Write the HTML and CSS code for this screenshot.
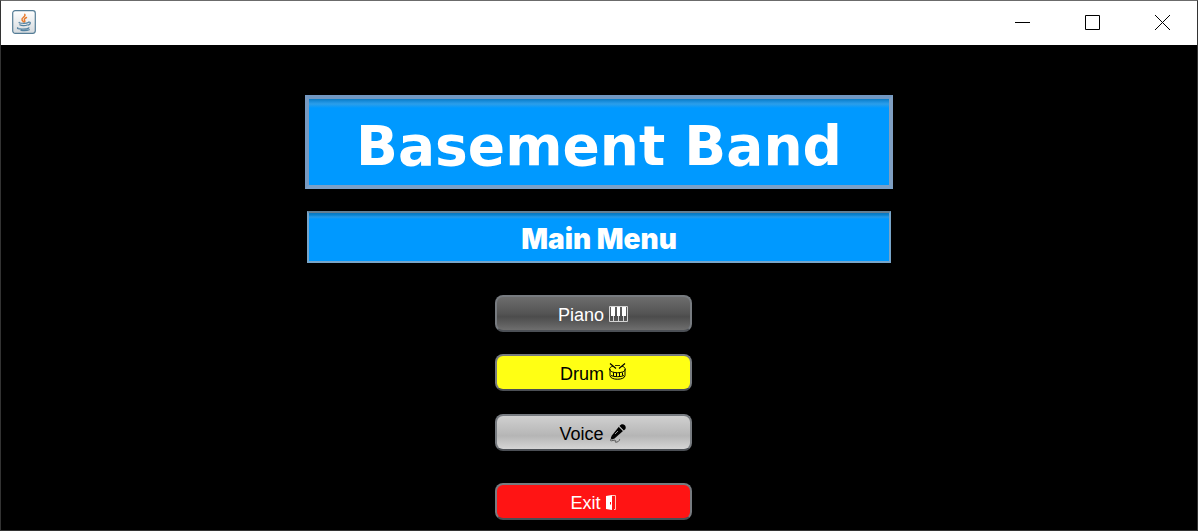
FILE: index.html
```html
<!DOCTYPE html>
<html lang="en">
<head>
<meta charset="utf-8">
<title>Basement Band</title>
<link rel="stylesheet" href="styles.css">
</head>
<body>
<div class="window">
  <header class="titlebar">
    <svg class="app-icon" width="24" height="24" viewBox="0 0 24 24" aria-hidden="true">
      <defs><linearGradient id="tile" x1="0" y1="0" x2="0" y2="1"><stop offset="0" stop-color="#fff"/><stop offset="1" stop-color="#d5dade"/></linearGradient></defs>
      <rect x=".7" y=".7" width="22.6" height="22.6" rx="2.5" fill="url(#tile)" stroke="#557d96" stroke-width="1.2"/>
      <g fill="none" stroke-linecap="round">
        <path d="M12.8 4.3c1.5 2.3-3.8 3.3-2.8 5.6.3.7 1.2 1.2 1.3 2M14.5 7.5c-3 1.4-2.2 2.3-1.7 3.3.3.6 0 1-.5 1.3" stroke="#e8792a" stroke-width="1.4"/>
        <path d="M7.200 12.400c-1 1 7.500 1.300 9 .1M7.800 14.800c1.500 1 6 1 7.400.1M16.500 12.200c2.600-.6 2.300 2.100-.2 2.900M5.800 17.700c-2.500 1.600 9 2.200 11.200.1M9 20.300c3 .4 6.500.2 8.300-.6" stroke="#5382a1" stroke-width="1.2"/>
      </g>
    </svg>
    <div class="window-controls">
      <button class="control" aria-label="Minimize"><svg width="15" height="15" viewBox="0 0 15 15"><path d="M0 7.5h15"/></svg></button>
      <button class="control" aria-label="Maximize"><svg width="15" height="15" viewBox="0 0 15 15"><path d="M.5.5h14v14H.5z"/></svg></button>
      <button class="control" aria-label="Close"><svg width="15" height="15" viewBox="0 0 15 15"><path d="M0 0l15 15M15 0L0 15"/></svg></button>
    </div>
  </header>
  <main class="content">
    <h1 class="banner banner-title">Basement Band</h1>
    <h2 class="banner banner-menu">Main Menu</h2>
    <nav class="menu" aria-label="Main Menu">
      <button class="item piano">Piano
        <svg width="19" height="16" viewBox="0 0 19 16" aria-hidden="true"><path d="M.5.5h18v15H.5zM4.500 10v5M9.500 10v5M14.500 10v5" fill="none" stroke="#d3d3d3"/><path d="M2 1h4v9H2zM8 1h3v9H8zM13 1h4v9h-4z" fill="#fff"/></svg>
      </button>
      <button class="item drum">Drum
        <svg width="17" height="18" viewBox="0 0 17 18" aria-hidden="true"><g fill="none" stroke="#000"><path d="M4 3C-.5 4.500-.5 7.500 3.500 9c3 1 7 1 10 0 4-1.500 3.500-4.500-.5-6M1 6v6.500c0 5 15 5 15 0V6M2 12.500c3 1.600 10 1.600 13 0M4.500 9.500v3.500M7.500 10v3.500M10.500 10v3.500M13.500 9.500v3"/><path d="M1 .5l6 5M16 .5l-6 5" stroke-width="1.2"/><path d="M6 2.500h5" stroke-width=".8"/></g></svg>
      </button>
      <button class="item voice">Voice
        <svg width="18" height="20" viewBox="0 0 18 20" aria-hidden="true"><path d="M9.800 3.800L14 8 5.500 15.500 2.800 16.500 1.700 15.300 2.700 12.800z"/><path d="M10.500 3C12 .5 14.500.8 15.800 2.200s1.500 3.600-1 5.200z"/><path d="M9.800 3.300l4.700 4.700M6 11l3-3" stroke="#b9b9b9" stroke-width=".8"/><path d="M2 16c-2 3.500 2.500.8 4 1.200 1.800.5-1 2 .7 2 2 0 3.800-1.200 4-3" fill="none" stroke="#555"/></svg>
      </button>
      <button class="item exit">Exit
        <svg width="10" height="15" viewBox="0 0 10 15" aria-hidden="true"><path d="M0 1l6-1v15l-6-1z" fill="#fff"/><path d="M6 .5h3.500v14H8" fill="none" stroke="#ffc9bb"/><path d="M4.500 7v2.500" stroke="#f11"/></svg>
      </button>
    </nav>
  </main>
</div>
</body>
</html>
```
FILE: styles.css
```css
* { box-sizing: border-box; }

body {
  margin: 0;
  background: #000;
  font-family: "Liberation Sans", Arial, sans-serif;
}

.window {
  display: flex;
  flex-direction: column;
  min-height: 100vh;
  border: 1px solid #333;
  border-top-color: #6b6b6b;
  background: #000;
}

.titlebar {
  display: flex;
  align-items: center;
  justify-content: space-between;
  height: 44px;
  padding-left: 11px;
  background: #fff;
}

.app-icon { margin-bottom: 3px; }

.window-controls { display: flex; height: 100%; padding-bottom: 2px; }

.control {
  display: grid;
  place-items: center;
  width: 70px;
  padding: 0;
  border: 0;
  background: none;
}

.control svg { fill: none; stroke: #000; }

.content {
  display: flex;
  flex-direction: column;
  align-items: center;
  padding: 50px 16px 10px;
}

.banner {
  display: grid;
  place-items: center;
  width: 100%;
  margin: 0;
  color: #fff;
  font-weight: 900;
}

.banner-title {
  max-width: 588px;
  min-height: 94px;
  padding-top: 7px;
  border: 4px solid;
  border-color: #7197c2 #7f9fc2 #7ba0c8 #7799c0;
  background: linear-gradient(#087bc5 0, #1c91e0 3px, #2c9ee9 5px, #09f 9px);
  font-family: "Arial Black", "DejaVu Sans", sans-serif;
  font-size: 55px;
  line-height: 64px;
}

.banner-menu {
  max-width: 584px;
  min-height: 52px;
  margin-top: 22px;
  padding-top: 3px;
  border: 2px solid #78a5c9;
  border-top-color: #647f93;
  background: linear-gradient(#0877bd 0, #0783d3 2px, #269ae8 4px, #09f 6px);
  font-family: "Arial Black", Inter, sans-serif;
  font-size: 28px;
  line-height: 32px;
}

.menu {
  display: flex;
  flex-direction: column;
  width: 197px;
  margin-top: 32px;
  margin-right: 12px;
}

.item {
  display: flex;
  align-items: center;
  justify-content: center;
  gap: 5px;
  height: 37px;
  margin-bottom: 22px;
  padding: 3px 0 0;
  border: 2px solid #777b80;
  border-bottom-color: #4b4f55;
  border-radius: 8px;
  font-family: inherit;
  font-size: 18px;
  line-height: 22px;
}

.item svg { margin-bottom: 2px; }

.piano { background: linear-gradient(#6d6d6d, #545454 50%, #4c4c4c 60%, #6e6e6e); color: #fff; }
.drum { margin-bottom: 23px; background: #ffff14; color: #000; }
.drum svg { margin-bottom: 5px; }
.voice { margin-bottom: 32px; background: linear-gradient(#d0d0d0, #bababa 50%, #b5b5b5 60%, #d5d5d5); color: #000; }
.exit { margin-bottom: 0; background: #ff1414; color: #fff; }
```
